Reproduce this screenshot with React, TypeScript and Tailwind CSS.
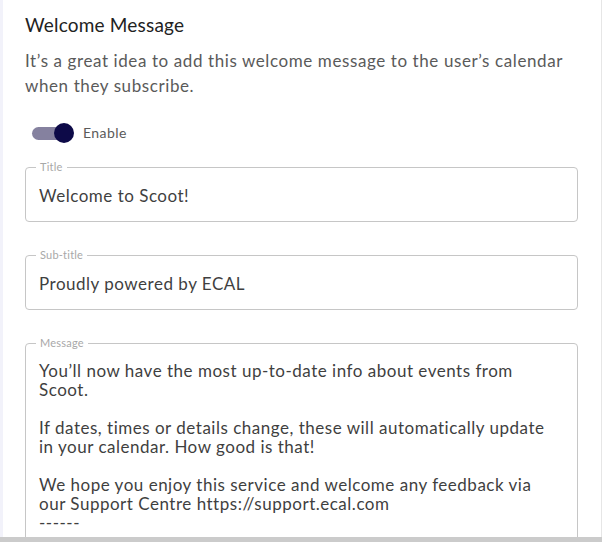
import { useState } from 'react';

const FONT = { fontFamily: 'Lato, "Noto Sans", sans-serif' };

const MESSAGE_LINES = [
  'You\u2019ll now have the most up-to-date info about events from',
  'Scoot.',
  '',
  'If dates, times or details change, these will automatically update',
  'in your calendar. How good is that!',
  '',
  'We hope you enjoy this service and welcome any feedback via',
  'our Support Centre https://support.ecal.com',
  '------',
];

function Field({ label, children }: { label: string; children: React.ReactNode }) {
  return (
    <fieldset className="m-0 min-w-0 rounded-[4px] border border-[#c6c6c6] p-0">
      <legend className="ml-[10px] px-1 text-[11px] leading-3 tracking-[0.02em] text-[#a8a8a8]">{label}</legend>
      {children}
    </fieldset>
  );
}

export default function App() {
  const [enabled, setEnabled] = useState(true);
  return (
    <div className="flex h-[542px] w-[602px] flex-col overflow-hidden bg-[#f2f2fa]" style={FONT}>
      <div className="ml-[3px] flex-1 overflow-hidden border-r border-[#e6e6e6] bg-white pl-[22px] pr-[23px]">
        <h2 className="pt-[13px] text-[19px] leading-6 tracking-[0.01em] text-[#222]">Welcome Message</h2>
        <p className="mt-[11px] text-[17px] leading-[25px] tracking-[0.035em] text-[#5a5a5a]">
          It&rsquo;s a great idea to add this welcome message to the user&rsquo;s calendar
          <br />
          when they subscribe.
        </p>

        <div className="mt-[24px] flex items-center gap-[9px] pl-[7px]">
          <button
            type="button"
            onClick={() => setEnabled(!enabled)}
            className="relative h-[20px] w-[42px]"
            aria-pressed={enabled}
          >
            <span className="absolute left-0 top-[4px] h-[13px] w-[34px] rounded-full bg-[#85819f]" />
            <span
              className={`absolute top-0 h-[20px] w-[20px] rounded-full bg-[#0d0a48] ${enabled ? 'left-[22px]' : 'left-0'}`}
            />
          </button>
          <span className="text-[14px] tracking-[0.03em] text-[#5a5a5a]">Enable</span>
        </div>

        <div className="mt-[18px] flex flex-col gap-[27px]">
          <Field label="Title">
            <div className="px-[13px] pb-[15px] pt-[13px] text-[17px] leading-5 tracking-[0.03em] text-[#3f3f3f]">
              Welcome to Scoot!
            </div>
          </Field>
          <Field label="Sub-title">
            <div className="px-[13px] pb-[15px] pt-[13px] text-[17px] leading-5 tracking-[0.03em] text-[#3f3f3f]">
              Proudly powered by ECAL
            </div>
          </Field>
          <Field label="Message">
            <div className="px-[13px] pb-[60px] pt-[12px] text-[17px] leading-[19px] tracking-[0.03em] text-[#3f3f3f]">
              {MESSAGE_LINES.map((line, i) => (
                <div key={i} className="h-[19px] whitespace-pre">
                  {line}
                </div>
              ))}
            </div>
          </Field>
        </div>
      </div>
      <div className="h-[5px] bg-[#cbcbcb]" />
    </div>
  );
}
